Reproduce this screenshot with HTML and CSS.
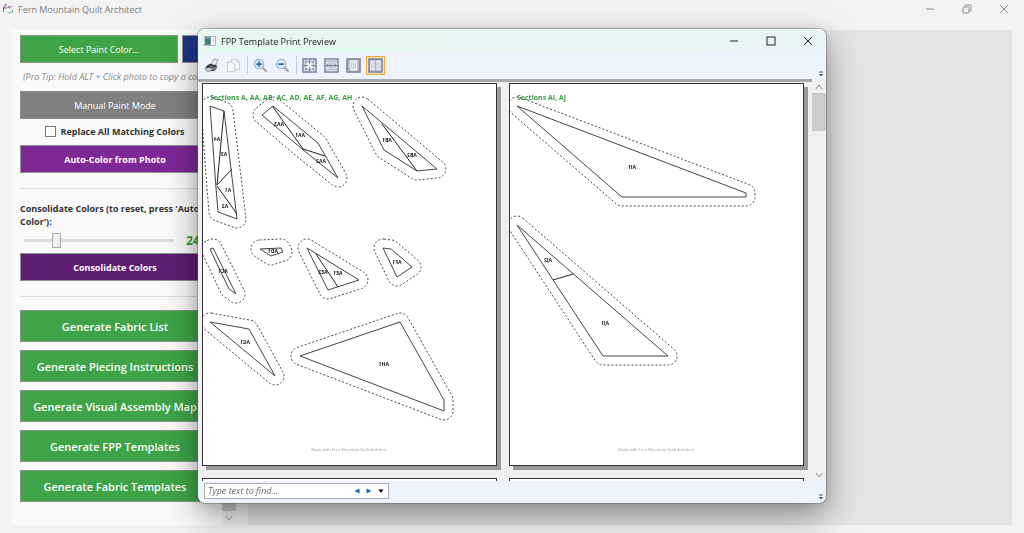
FILE: index.html
```html
<!DOCTYPE html>
<html lang="en">
<head>
<meta charset="utf-8">
<title>Fern Mountain Quilt Architect</title>
<link rel="stylesheet" href="styles.css">
</head>
<body>
<div class="app">
  <header class="app-bar">
    <svg class="app-logo" viewBox="0 0 12 12" aria-hidden="true">
      <path d="M1.500 8.500C1 5 2 2 5 1.500M1.500 5.500l3-1" fill="none" stroke="#6b4a72" stroke-width="1"/>
      <path d="M5 5.500l3-3M7 3l.5 2.500M9 4.500L10.500 3" fill="none" stroke="#8a4f86" stroke-width=".9"/>
      <path d="M5.500 9.500l2 .8M8 9.500l2.500-.5M10.500 7v2" fill="none" stroke="#5aa565" stroke-width=".9"/>
    </svg>
    <span class="app-name">Fern Mountain Quilt Architect</span>
    <div class="win-controls app-controls">
      <button type="button" aria-label="Minimize"><svg viewBox="0 0 10 10"><path d="M1 5h8"/></svg></button>
      <button type="button" aria-label="Restore"><svg viewBox="0 0 10 10"><rect x="1" y="3" width="6" height="6" rx="1"/><path d="M3 2.5V2q0-1 1-1h4q1 0 1 1v4q0 1-1 1h-.5"/></svg></button>
      <button type="button" aria-label="Close"><svg viewBox="0 0 10 10"><path d="M1 1l8 8M9 1L1 9"/></svg></button>
    </div>
  </header>

  <main class="workspace">
    <aside class="panel">
      <div class="panel-content">
        <div class="paint-row">
          <button type="button" class="btn green">Select Paint Color...</button>
          <button type="button" class="btn swatch" aria-label="Current paint color"></button>
        </div>
        <p class="tip">(Pro Tip: Hold ALT + Click photo to copy a color)</p>
        <button type="button" class="btn gray">Manual Paint Mode</button>
        <label class="check"><input type="checkbox">Replace All Matching Colors</label>
        <button type="button" class="btn purple strong">Auto-Color from Photo</button>
        <hr>
        <label class="field-label" for="amount">Consolidate Colors (to reset, press 'Auto Color'):</label>
        <div class="slider-row">
          <input type="range" id="amount" min="0" max="100" value="20">
          <output for="amount">24</output>
        </div>
        <button type="button" class="btn plum strong">Consolidate Colors</button>
        <hr>
        <div class="generate">
          <button type="button" class="btn green tall">Generate Fabric List</button>
          <button type="button" class="btn green tall">Generate Piecing Instructions</button>
          <button type="button" class="btn green tall">Generate Visual Assembly Map</button>
          <button type="button" class="btn green tall">Generate FPP Templates</button>
          <button type="button" class="btn green tall">Generate Fabric Templates</button>
        </div>
      </div>
      <div class="scrollbar panel-scroll">
        <div class="thumb"></div>
        <svg class="chev" viewBox="0 0 8 6"><path d="M1 1l3 4 3-4"/></svg>
      </div>
    </aside>
    <section class="canvas" aria-label="Quilt canvas"></section>
  </main>
</div>

<div class="overlay">
  <section class="dialog" role="dialog" aria-label="FPP Template Print Preview">
    <header class="dialog-bar">
      <svg class="dialog-logo" viewBox="0 0 12 10" aria-hidden="true">
        <rect x=".5" y=".5" width="11" height="9" fill="#fff" stroke="#a9b4b8"/>
        <rect x="1" y="1" width="6" height="8" fill="#6f93a0"/><rect x="2" y="3" width="4" height="5" fill="#2f8272"/>
        <path d="M9.500 2v6" stroke="#c5ccd2"/>
      </svg>
      <h1>FPP Template Print Preview</h1>
      <div class="win-controls dialog-controls">
        <button type="button" aria-label="Minimize"><svg viewBox="0 0 10 10"><path d="M1 5h8"/></svg></button>
        <button type="button" aria-label="Maximize"><svg viewBox="0 0 10 10"><rect x="1" y="1" width="8" height="8"/></svg></button>
        <button type="button" aria-label="Close"><svg viewBox="0 0 10 10"><path d="M1 1l8 8M9 1L1 9"/></svg></button>
      </div>
    </header>

    <div class="toolbar" role="toolbar" aria-label="Preview tools">
      <button type="button" class="tool" aria-label="Print"><svg viewBox="0 0 16 16"><path d="M7 7l4-6 4 1-3 6z" fill="#e9edf3" stroke="#777" stroke-width=".7"/><path d="M2 9l4-3 8 2-2 5-3 1-7-2z" fill="#3b3d45"/><path d="M5 8l7 2 2-2v3l-3 3" fill="#777b86"/><path d="M1 11l5-1 4 2-6 3z" fill="#c9ccd3" stroke="#555" stroke-width=".6"/></svg></button>
      <button type="button" class="tool" aria-label="Copy"><svg viewBox="0 0 16 16" fill="#f6f8fc" stroke="#c0c6d2"><path d="M5.500 1.500h6l3 3v8h-9z"/><path d="M11.500 1.500v3h3" fill="none"/><path d="M1.500 4.500h5l3 3v7h-8z"/></svg></button>
      <span class="divider"></span>
      <button type="button" class="tool" aria-label="Increase the size of the content"><svg viewBox="0 0 16 16"><path d="M10 10l4.500 4.500" stroke="#b3a8a5" stroke-width="2.400"/><circle cx="6.500" cy="6.500" r="5" fill="#e2f1fc" stroke="#8fb2d2" stroke-width="1.200"/><path d="M3.500 6.500h6M6.500 3.500v6" stroke="#1d6fb8" stroke-width="1.800"/></svg></button>
      <button type="button" class="tool" aria-label="Decrease the size of the content"><svg viewBox="0 0 16 16"><path d="M10 10l4.500 4.500" stroke="#b3a8a5" stroke-width="2.400"/><circle cx="6.500" cy="6.500" r="5" fill="#e2f1fc" stroke="#8fb2d2" stroke-width="1.200"/><path d="M3.500 6.500h6" stroke="#1d6fb8" stroke-width="1.800"/></svg></button>
      <span class="divider"></span>
      <button type="button" class="tool" aria-label="Actual size"><svg viewBox="0 0 16 16"><rect x="1" y="1" width="14" height="14" fill="#d9deea" stroke="#7c86a3" stroke-width="1.600"/><rect x="4" y="4" width="8" height="8" fill="#eef0f4" stroke="#9aa2b5" stroke-width=".8"/><path d="M8 2v4M8 10v4M2 8h4M10 8h4M3 3l2 2M13 3l-2 2M3 13l2-2M13 13l-2-2" stroke="#6b7390"/></svg></button>
      <button type="button" class="tool" aria-label="Fit to page width"><svg viewBox="0 0 16 16"><rect x="1" y="1" width="14" height="14" fill="#e3e7f0" stroke="#7c86a3" stroke-width="1.600"/><path d="M2 3.500h12M2 12.500h12" stroke="#a5adc0"/><rect x="4" y="5" width="8" height="6" fill="#c6cad3"/><path d="M2 8h12M4 6.500L2.500 8 4 9.500M12 6.500L13.500 8 12 9.500" fill="none" stroke="#6b7390"/></svg></button>
      <button type="button" class="tool" aria-label="Whole page"><svg viewBox="0 0 16 16"><rect x="1" y="1" width="14" height="14" fill="#aeb6cb" stroke="#7c86a3" stroke-width="1.600"/><rect x="4" y="2.500" width="8" height="11" fill="#eceef2"/><path d="M6 4.500v7M8 4.500v7M10 4.500v7" stroke="#c2c6cf"/></svg></button>
      <button type="button" class="tool selected" aria-label="Two pages" aria-pressed="true"><svg viewBox="0 0 16 16"><rect x="1" y="1" width="14" height="14" fill="#aeb6cb" stroke="#7c86a3" stroke-width="1.600"/><path d="M2.500 3H7v10H2.500zM9 3h4.500v10H9z" fill="#eceef2"/><path d="M4 4.500v7M5.500 4.500v7M10.500 4.500v7M12 4.500v7" stroke="#c2c6cf" stroke-width=".8"/></svg></button>
      <svg class="overflow-mark" viewBox="0 0 6 6"><path d="M1 1h4" stroke="#555"/><path d="M1 3h4L3 5.500z" fill="#444"/></svg>
    </div>

    <div class="preview">
      <div class="pages">
        <div class="sheet" data-page="0"></div>
        <div class="sheet" data-page="1"></div>
        <div class="sheet"></div>
        <div class="sheet"></div>
      </div>
      <div class="scrollbar preview-scroll">
        <svg class="chev" viewBox="0 0 8 6"><path d="M1 5l3-4 3 4"/></svg>
        <div class="thumb"></div>
        <svg class="chev end" viewBox="0 0 8 6"><path d="M1 1l3 4 3-4"/></svg>
      </div>
    </div>

    <footer class="find-bar">
      <div class="find-box">
        <input type="text" aria-label="Find" placeholder="Type text to find...">
        <button type="button" aria-label="Find previous"><svg viewBox="0 0 6 6"><path d="M5.500 .5v5L.5 3z" fill="#0f6cbd"/></svg></button>
        <button type="button" aria-label="Find next"><svg viewBox="0 0 6 6"><path d="M.5 .5v5l5-2.500z" fill="#0f6cbd"/></svg></button>
        <button type="button" aria-label="Find options"><svg viewBox="0 0 6 6"><path d="M.5 1.500h5L3 5z" fill="#000"/></svg></button>
      </div>
      <svg class="overflow-mark" viewBox="0 0 6 6"><path d="M1 1h4" stroke="#555"/><path d="M1 3h4L3 5.500z" fill="#444"/></svg>
    </footer>
  </section>
</div>
<script src="templates.js"></script>
</body>
</html>
```
FILE: styles.css
```css
* { box-sizing: border-box; }

body {
  margin: 0;
  font-family: "Open Sans", "Noto Sans", sans-serif;
  font-size: 9px;
  color: #333;
  background: #f3f3f3;
}

button {
  font: inherit;
  color: inherit;
  border: 0;
  padding: 0;
  background: none;
}

.app {
  display: flex;
  flex-direction: column;
  height: 100vh;
  overflow: hidden;
}

.app-bar {
  display: flex;
  align-items: center;
  flex: none;
  height: 18px;
  padding: 0 15px 0 2px;
  gap: 4px;
  color: #7c7c7c;
}
.app-logo { width: 12px; height: 12px; }

.win-controls { display: flex; margin-left: auto; }
.win-controls button { display: flex; }
.win-controls svg {
  width: 10px;
  height: 10px;
  fill: none;
  stroke: currentColor;
}
.app-controls { gap: 27px; color: #8c8c8c; }
.dialog-controls { gap: 27px; color: #222; }

.workspace {
  display: flex;
  flex: 1;
  min-height: 0;
  gap: 12px;
  padding: 12px 12px 8px;
}

.panel {
  display: flex;
  flex: none;
  width: 224px;
  background: #fafafa;
}
.panel-content {
  flex: 1;
  min-width: 0;
  padding: 5px 12px 0 8px;
}
.canvas { flex: 1; background: #e4e4e4; }

.btn {
  display: block;
  width: 100%;
  height: 28px;
  border: 1px solid #8a948a;
  color: #fff;
  white-space: nowrap;
}
.strong { font-weight: 700; }
.tall { height: 32px; font-size: 11px; font-weight: 600; }
.green { background: #3ea447; }
.gray { background: #808080; }
.purple { background: #7e2896; }
.plum { background: #5e1d70; }
.swatch { background: #1f3486; }

.paint-row {
  display: grid;
  grid-template-columns: 158px 1fr;
  gap: 4px;
}

.tip {
  margin: 0;
  padding-left: 3px;
  font-style: italic;
  color: #888;
  line-height: 28px;
  white-space: nowrap;
}

.check {
  display: flex;
  align-items: center;
  justify-content: center;
  gap: 4px;
  height: 26px;
  padding-bottom: 1px;
  font-weight: 700;
  white-space: nowrap;
}
.check input {
  appearance: none;
  width: 11px;
  height: 11px;
  margin: 0;
  border: 1px solid #777;
  background: #fff;
}

hr {
  height: 1px;
  margin: 15px 0 13px;
  border: 0;
  background: #ddd;
}

.field-label {
  display: block;
  line-height: 13px;
  font-weight: 700;
  margin-right: -10px;
}

.slider-row {
  display: flex;
  align-items: center;
  height: 25px;
  padding-left: 4px;
  gap: 12px;
}
.slider-row input {
  appearance: none;
  flex: none;
  width: 150px;
  height: 15px;
  margin: 0;
  background: linear-gradient(#dcdcdc, #dcdcdc) center / 100% 3px no-repeat;
}
.slider-row input::-webkit-slider-thumb {
  appearance: none;
  width: 9px;
  height: 15px;
  border: 1px solid #aaa;
  background: #f0f0f0;
}
.slider-row output { font-size: 12px; font-weight: 700; color: #2f9a3c; }

.generate { display: grid; gap: 8px; }

.scrollbar {
  display: flex;
  flex-direction: column;
  align-items: center;
  flex: none;
  width: 14px;
  background: #f0f0f0;
}
.scrollbar .thumb { width: 100%; background: #cbcbcb; }
.chev {
  width: 8px;
  height: 6px;
  fill: none;
  stroke: #8a8a8a;
}
.panel-scroll { padding-bottom: 4px; gap: 4px; }
.panel-scroll .thumb { flex: 1; }

.overlay {
  position: fixed;
  inset: 0;
  display: flex;
  padding: 29px 198px 30px;
}

.dialog {
  display: flex;
  flex-direction: column;
  flex: 1;
  min-width: 0;
  overflow: hidden;
  border-radius: 7px;
  background: #eef4fd;
  box-shadow: 0 0 0 1px rgba(90, 90, 90, .4), 0 2px 16px rgba(0, 0, 0, .16), 0 14px 36px rgba(0, 0, 0, .36);
}

.dialog-bar {
  display: flex;
  align-items: center;
  flex: none;
  height: 24px;
  padding: 0 13px 0 6px;
  gap: 5px;
  background: linear-gradient(90deg, #e6f7f1, #e9f5f7);
}
.dialog-logo { width: 12px; height: 10px; }
.dialog-bar h1 {
  margin: 0;
  font-size: 9px;
  font-weight: 400;
  color: #222;
}

.toolbar {
  display: flex;
  align-items: center;
  flex: none;
  height: 26px;
  padding: 0 2px 2px 4px;
  gap: 3px;
}
.tool {
  display: flex;
  align-items: center;
  justify-content: center;
  width: 19px;
  height: 19px;
}
.tool svg { width: 15px; height: 15px; }
.tool.selected { background: #fbe3b4; box-shadow: inset 0 0 0 1px #eda73a; }
.divider { width: 1px; height: 18px; margin-left: 1px; background: #c5cad6; }
.overflow-mark { width: 6px; height: 6px; margin-left: auto; align-self: flex-end; }

.preview {
  display: flex;
  flex: 1;
  min-height: 0;
  background: #f0f0f0;
}
.pages {
  display: grid;
  grid-template-columns: 1fr 1fr;
  align-content: start;
  flex: 1;
  gap: 12px;
  padding: 1px 8px 0 4px;
  border-top: 3px solid #aaa8aa;
  overflow: hidden;
}
.sheet {
  aspect-ratio: 295 / 383;
  border: 1px solid #333;
  background: #fff;
  box-shadow: 4px 4px 0 #999;
}
.sheet svg { display: block; width: 100%; }

.preview-scroll { padding: 5px 0 3px; }
.preview-scroll .thumb { height: 38px; margin-top: 3px; }
.preview-scroll .end { margin-top: auto; }

.outline { fill: none; stroke: #444; stroke-width: 1; }
.seam { stroke: #222; stroke-width: 1; }
.cut-line { fill: none; stroke: #444; stroke-width: 1; stroke-dasharray: 2 2; }
.sheet-title { font-size: 7px; font-weight: 700; fill: #3a9e44; }
.sheet-credit { font-size: 4px; fill: #999; text-anchor: middle; }
.piece { font-size: 5px; font-weight: 700; fill: #111; text-anchor: middle; }

.find-bar {
  display: flex;
  align-items: center;
  flex: none;
  height: 22px;
  padding: 0 2px 3px 6px;
}
.find-box {
  display: flex;
  align-items: center;
  width: 185px;
  height: 16px;
  padding: 0 4px 0 3px;
  gap: 6px;
  border: 1px solid #abadb3;
  background: #fff;
}
.find-box input {
  flex: 1;
  min-width: 0;
  padding: 0;
  border: 0;
  outline: 0;
  font: italic 9px "Open Sans", "Noto Sans", sans-serif;
}
.find-box input::placeholder { color: #666; }
.find-box button { display: flex; }
.find-box svg { width: 6px; height: 6px; }
```
FILE: templates.js
```js
// Foundation piecing sections are mirrored, so piece labels are drawn reversed.
const ALLOWANCE = 9;

const pages = [
  {
    title: "Sections A, AA, AB, AC, AD, AE, AF, AG, AH",
    sections: [
      { outline: [[8, 23], [22, 28], [35, 136], [16, 129], [14, 105]],
        seams: [[22, 28, 15, 102], [30, 86, 15, 102], [15, 103, 35, 131]],
        labels: [["A4", 15, 56], ["A3", 22, 71], ["A1", 26, 107], ["A2", 23, 123]] },
      { outline: [[60, 32], [71, 23], [116, 60], [136, 95], [100, 66]],
        seams: [[71, 24, 101, 66], [101, 66, 123, 73]],
        labels: [["AA3", 77, 41], ["AA1", 98, 52], ["AA2", 119, 78]] },
      { outline: [[160, 23], [235, 86], [215, 88], [182, 67]],
        seams: [[180, 41, 215, 88]],
        labels: [["AB1", 185, 57], ["AB2", 210, 72]] },
      { outline: [[8, 166], [11, 165], [34, 211], [27, 206]],
        seams: [], labels: [["AC1", 21, 188]] },
      { outline: [[58, 166], [79, 165], [81, 169], [69, 173]],
        seams: [], labels: [["AD1", 71, 168]] },
      { outline: [[105, 165], [157, 197], [126, 207]],
        seams: [[114, 171, 136, 204]],
        labels: [["AE2", 121, 189], ["AE1", 136, 190]] },
      { outline: [[181, 165], [189, 166], [210, 184], [195, 194]],
        seams: [], labels: [["AF1", 195, 179]] },
      { outline: [[8, 239], [47, 246], [73, 293]],
        seams: [], labels: [["AG1", 43, 259]] },
      { outline: [[98, 273], [198, 239], [242, 317], [242, 328]],
        seams: [], labels: [["AH1", 182, 281]] }
    ]
  },
  {
    title: "Sections AI, AJ",
    sections: [
      { outline: [[8, 23], [237, 110], [237, 114], [113, 114]],
        seams: [], labels: [["AI1", 123, 84]] },
      { outline: [[8, 142], [159, 273], [94, 273]],
        seams: [[44, 197, 64, 191]],
        labels: [["AJ2", 39, 177], ["AJ1", 96, 240]] }
    ]
  }
];

// Clockwise polygon grown outward by d, with rounded corners.
function grow(points, d) {
  const n = points.length;
  let path = "";
  for (let i = 0; i < n; i++) {
    const [x1, y1] = points[i];
    const [x2, y2] = points[(i + 1) % n];
    const len = Math.hypot(x2 - x1, y2 - y1);
    const nx = (y2 - y1) / len * d;
    const ny = -(x2 - x1) / len * d;
    path += i ? `A${d} ${d} 0 0 1 ${x1 + nx} ${y1 + ny}` : `M${x1 + nx} ${y1 + ny}`;
    path += `L${x2 + nx} ${y2 + ny}`;
    if (i === n - 1) {
      const [x3, y3] = points[1];
      const first = Math.hypot(x3 - x2, y3 - y2);
      path += `A${d} ${d} 0 0 1 ${x2 + (y3 - y2) / first * d} ${y2 - (x3 - x2) / first * d}`;
    }
  }
  return path + "Z";
}

function drawSection(s) {
  const seams = s.seams.map(([a, b, c, d]) =>
    `<line class="seam" x1="${a}" y1="${b}" x2="${c}" y2="${d}"/>`).join("");
  const labels = s.labels.map(([text, x, y]) =>
    `<text class="piece" transform="translate(${x} ${y + 2}) scale(-1 1)">${text}</text>`).join("");
  return `<path class="cut-line" d="${grow(s.outline, ALLOWANCE)}"/>` +
    `<polygon class="outline" points="${s.outline.join(" ")}"/>` + seams + labels;
}

document.querySelectorAll("[data-page]").forEach(sheet => {
  const page = pages[sheet.dataset.page];
  sheet.innerHTML = `<svg viewBox="1 1 293 381">
    <text class="sheet-title" x="8" y="17">${page.title}</text>
    ${page.sections.map(drawSection).join("")}
    <text class="sheet-credit" x="147" y="368">Made with Fern Mountain Quilt Architect</text>
  </svg>`;
});
```
